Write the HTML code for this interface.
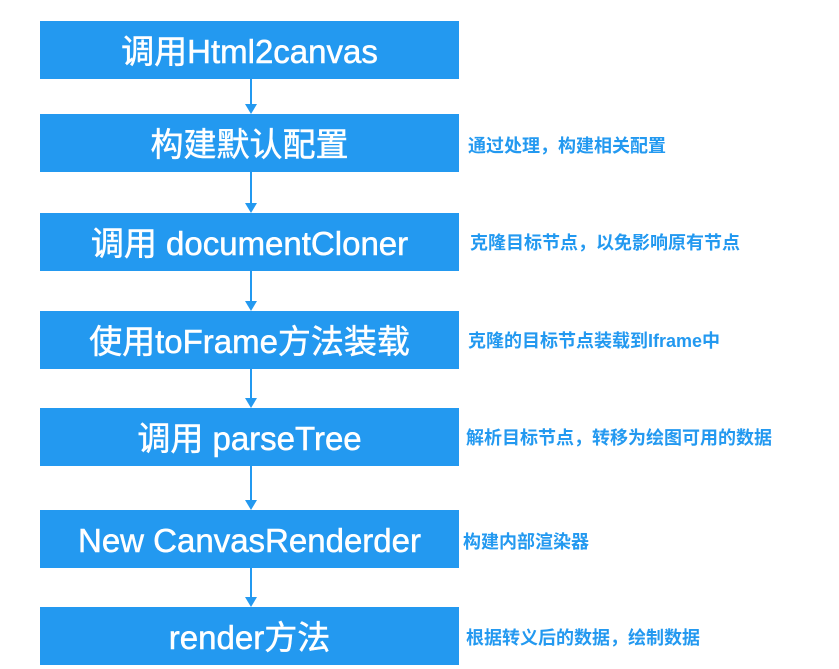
<!DOCTYPE html>
<html><head><meta charset="utf-8"><style>
body{margin:0;width:839px;height:667px;background:#fff;position:relative;overflow:hidden;font-family:"Liberation Sans","Noto Sans CJK SC",sans-serif}
.b{position:absolute;left:40px;width:419px;height:58px;background:#2399f0;color:#fff;font-size:33px;line-height:62px;text-align:center;white-space:nowrap;-webkit-text-stroke:0.5px #fff}
.t{position:absolute;color:#2399f0;font-size:18px;line-height:22px;font-weight:bold;white-space:nowrap}
.a{position:absolute;left:250px;width:2px;background:#2399f0}
.h{position:absolute;left:245px;width:0;height:0;border-left:6px solid transparent;border-right:6px solid transparent;border-top:10px solid #2399f0}
</style></head><body>
<div class="b" style="top:21px">调用Html2canvas</div>
<div class="b" style="top:114px">构建默认配置</div>
<div class="b" style="top:213px">调用 documentCloner</div>
<div class="b" style="top:311px">使用toFrame方法装载</div>
<div class="b" style="top:408px">调用 parseTree</div>
<div class="b" style="top:510px">New CanvasRenderder</div>
<div class="b" style="top:607px">render方法</div>

<div class="a" style="top:79px;height:26px"></div><div class="h" style="top:104px"></div>
<div class="a" style="top:172px;height:32px"></div><div class="h" style="top:203px"></div>
<div class="a" style="top:271px;height:31px"></div><div class="h" style="top:301px"></div>
<div class="a" style="top:369px;height:30px"></div><div class="h" style="top:398px"></div>
<div class="a" style="top:466px;height:35px"></div><div class="h" style="top:500px"></div>
<div class="a" style="top:568px;height:30px"></div><div class="h" style="top:597px"></div>

<div class="t" style="left:468px;top:135px">通过处理，构建相关配置</div>
<div class="t" style="left:470px;top:232px">克隆目标节点，以免影响原有节点</div>
<div class="t" style="left:468px;top:330px">克隆的目标节点装载到Iframe中</div>
<div class="t" style="left:466px;top:427px">解析目标节点，转移为绘图可用的数据</div>
<div class="t" style="left:463px;top:531px">构建内部渲染器</div>
<div class="t" style="left:466px;top:627px">根据转义后的数据，绘制数据</div>
</body></html>
